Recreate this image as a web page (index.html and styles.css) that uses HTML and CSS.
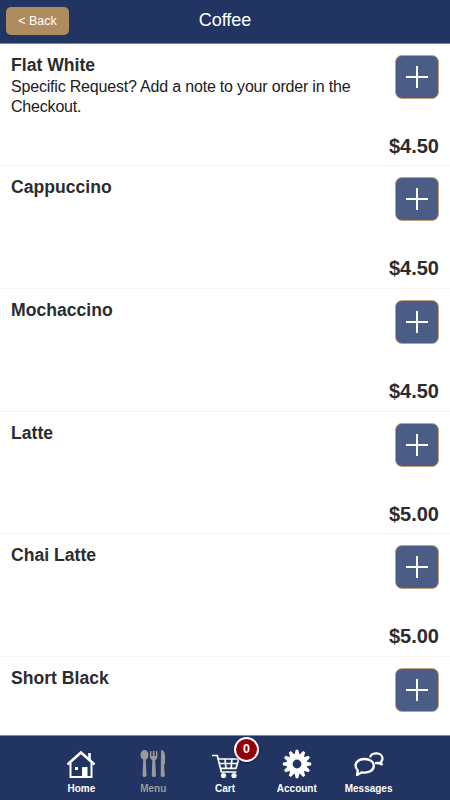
FILE: index.html
```html
<!DOCTYPE html>
<html lang="en">
<head>
<meta charset="utf-8">
<title>Coffee</title>
<link rel="stylesheet" href="styles.css">
</head>
<body>
<div class="app">
  <header class="header">
    <a class="back">&lt; Back</a>
    <h1 class="title">Coffee</h1>
  </header>
  <main class="list">
    <section class="item">
      <div class="info"><h2 class="name">Flat White</h2><p class="note">Specific Request? Add a note to your order in the<br>Checkout.</p></div>
      <div class="side"><button class="add" aria-label="Add"></button><span class="price">$4.50</span></div>
    </section>
    <section class="item">
      <div class="info"><h2 class="name">Cappuccino</h2></div>
      <div class="side"><button class="add" aria-label="Add"></button><span class="price">$4.50</span></div>
    </section>
    <section class="item">
      <div class="info"><h2 class="name">Mochaccino</h2></div>
      <div class="side"><button class="add" aria-label="Add"></button><span class="price">$4.50</span></div>
    </section>
    <section class="item">
      <div class="info"><h2 class="name">Latte</h2></div>
      <div class="side"><button class="add" aria-label="Add"></button><span class="price">$5.00</span></div>
    </section>
    <section class="item">
      <div class="info"><h2 class="name">Chai Latte</h2></div>
      <div class="side"><button class="add" aria-label="Add"></button><span class="price">$5.00</span></div>
    </section>
    <section class="item">
      <div class="info"><h2 class="name">Short Black</h2></div>
      <div class="side"><button class="add" aria-label="Add"></button></div>
    </section>
  </main>
  <nav class="tabs">
    <a class="tab">
      <svg class="icon" viewBox="0 0 32 32" fill="none" stroke="#fff">
        <path d="M2.500 16.500 16 4.500 29.500 16.500" stroke-width="2.600"/>
        <path d="M24.500 5v7" stroke-width="2.600"/>
        <path d="M5.500 15v14h21V15" stroke-width="2"/>
        <path d="M17 19h5.500v10H17zM10 19h3v3h-3z" fill="#fff" stroke="none"/>
      </svg>
      <span>Home</span>
    </a>
    <a class="tab muted">
      <svg class="icon" viewBox="0 0 32 32" fill="#999">
        <ellipse cx="7.500" cy="7" rx="4" ry="5"/>
        <path d="M6.300 10h2.400l.8 17.500q0 1.500-2 1.500t-2-1.500z"/>
        <path d="M13 3h1.400v5h1.400V3h1.800v5H19V3h1.400v6q0 2.500-2.200 3l.8 15.500q0 1.500-2.200 1.500t-2-1.500l.5-15.500Q13 11.500 13 9z"/>
        <path d="M24 2q4 .5 4 6v7.500l-1 2 .8 10q0 1.500-2 1.500t-2.100-1.500z"/>
      </svg>
      <span>Menu</span>
    </a>
    <a class="tab">
      <svg class="icon" viewBox="0 0 32 32" fill="none" stroke="#fff" stroke-width="1.700">
        <path d="M3 7.500h5.300l4 16.500h15.200"/>
        <path d="M9.200 11h20.600L27 20.300H11.500M10.500 15.500h18M16 11l1 9.500M22.900 11l-.8 9.500"/>
        <circle cx="14.500" cy="27.500" r="2.600" fill="#fff" stroke="none"/>
        <circle cx="25" cy="27.500" r="2.600" fill="#fff" stroke="none"/>
      </svg>
      <span class="badge">0</span>
      <span>Cart</span>
    </a>
    <a class="tab">
      <svg class="icon" viewBox="0 0 32 32" fill="#fff">
        <defs><path id="teeth" d="M13.400 7 14.800 1.800h2.400L18.600 7zM13.400 25l1.400 5.200h2.400l1.400-5.200z"/></defs>
        <use href="#teeth"/><use href="#teeth" transform="rotate(30 16 16)"/><use href="#teeth" transform="rotate(60 16 16)"/><use href="#teeth" transform="rotate(90 16 16)"/><use href="#teeth" transform="rotate(120 16 16)"/><use href="#teeth" transform="rotate(150 16 16)"/>
        <circle cx="16" cy="16" r="7.300" fill="none" stroke="#fff" stroke-width="5.800"/>
      </svg>
      <span>Account</span>
    </a>
    <a class="tab">
      <svg class="icon" viewBox="0 0 32 32" fill="none" stroke="#fff" stroke-width="2.300" stroke-linejoin="round">
        <path d="M4.800 22.500C-.5 16.500 4.500 11 11.500 11c5.500 0 9.300 2.800 9.300 6.700 0 5-5.600 7.800-11.800 6.600L4 27z"/>
        <path d="M17.200 9.300C18 4 29.500 4 29.500 10.500c0 2-.8 2.600-1.700 3.400l1 2.500-3.800-1.500-3 .2"/>
      </svg>
      <span>Messages</span>
    </a>
  </nav>
</div>
</body>
</html>
```
FILE: styles.css
```css
* { box-sizing: border-box; }
body { margin: 0; font-family: "Liberation Sans", Arial, sans-serif; background: #fff; color: #2c2c2e; }
.app { height: 800px; display: flex; flex-direction: column; overflow: hidden; }
.header { height: 44px; flex: none; display: grid; grid-template-columns: 100px 1fr 100px; align-items: center; background: #213462; border-bottom: 1px solid #7583ad; color: #fff; }
.back { width: 63px; height: 28px; margin: 0 0 1px 6px; border-radius: 5px; background: #af8b60; font-size: 12.500px; line-height: 29px; text-align: center; }
.title { margin: 0 0 3px; font-size: 18px; font-weight: 400; text-align: center; }
.list { flex: 1; min-height: 0; overflow: hidden; }
.item { height: 122.600px; padding: 11px 11px 0; display: flex; justify-content: space-between; border-bottom: 1px solid #f3f3f3; }
.item:first-child { height: 122.400px; }
.info { flex: 1; }
.name { margin: 0; font-size: 17.600px; line-height: 21px; font-weight: 700; }
.note { margin: 1px 0 0; font-size: 16px; letter-spacing: -.19px; line-height: 20px; color: #202022; white-space: nowrap; }
.side { display: flex; flex-direction: column; align-items: flex-end; }
.add { width: 44px; height: 44px; padding: 0; border: 1px solid #c3a07b; border-radius: 7px; background: linear-gradient(#fff, #fff) center / 22px 2px no-repeat, linear-gradient(#fff, #fff) center / 2px 22px no-repeat, #4b5d84; }
.price { margin-top: 35px; font-size: 20px; line-height: 24px; font-weight: 700; }
.tabs { height: 65px; flex: none; display: flex; justify-content: center; background: #213462; border-top: 1px solid #7f89a0; color: #fff; }
.tab { position: relative; width: 71.800px; padding-top: 12px; display: flex; flex-direction: column; align-items: center; font-size: 10px; line-height: 14px; font-weight: 700; }
.muted { color: #999; }
.icon { width: 32px; height: 32px; margin-bottom: 2px; }
.badge { position: absolute; left: 45px; top: 1px; width: 25px; height: 25px; border: 2px solid #fff; border-radius: 50%; background: #930008; font-size: 12.500px; line-height: 21px; text-align: center; box-shadow: 0 1px 2px #0008; }
```
